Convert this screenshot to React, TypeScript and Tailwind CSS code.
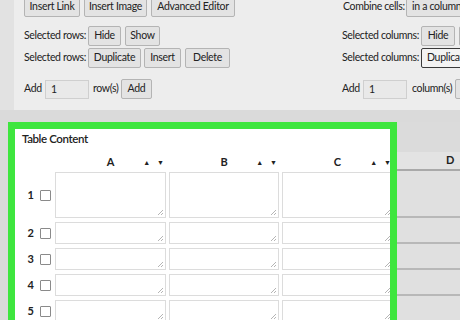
import React from 'react';

const font = '[font-family:Lato,sans-serif]';

const Btn: React.FC<{ w: string; children: React.ReactNode; focus?: boolean }> = ({ w, children, focus }) => (
  <div
    className={`${w} h-[20px] shrink-0 flex items-center justify-center rounded-[2px] border text-[10.5px] tracking-[-0.3px] text-[#222] whitespace-nowrap overflow-hidden ${
      focus ? 'border-[#3a3a3a] bg-[#f3f3f3]' : 'border-[#b4b4b4] bg-[#e3e3e3]'
    }`}
  >
    {children}
  </div>
);

const Label: React.FC<{ w: string; children: React.ReactNode }> = ({ w, children }) => (
  <span className={`${w} shrink-0 text-[10.5px] tracking-[-0.35px] text-[#222] whitespace-nowrap`}>{children}</span>
);

const rows = [
  { n: 1, h: 'h-[46px]' },
  { n: 2, h: 'h-[22px]' },
  { n: 3, h: 'h-[22px]' },
  { n: 4, h: 'h-[22px]' },
  { n: 5, h: 'h-[22px]' },
];

const Arrows = () => (
  <div className="flex items-center gap-[7px] pr-[2px] text-[7px] text-[#222]">
    <span>▲</span>
    <span>▼</span>
  </div>
);

// textarea box with a faint resize grip
const Cell: React.FC<{ w: string; h: string }> = ({ w, h }) => (
  <div className={`${w} ${h} shrink-0 relative border border-[#dcdcdc] bg-white`}>
    <svg className="absolute right-[1px] bottom-[1px]" width="7" height="7" viewBox="0 0 7 7">
      <path d="M6 1L1 6M6 4L4 6" stroke="#b5b5b5" strokeWidth="1" />
    </svg>
  </div>
);

export default function App() {
  return (
    <div className={`w-[460px] h-[320px] overflow-hidden bg-[#dadada] ${font}`}>
      {/* Top toolbar panel */}
      <div className="flex h-[110px]">
        <div className="w-[14px] bg-[#e2e2e2]" />
        <div className="flex-1 bg-[#ededed] pl-[10px] overflow-hidden">
          <div className="flex flex-col -mt-[3px]">
            {/* row 1 */}
            <div className="flex items-center h-[20px]">
              <div className="w-[318px] shrink-0 flex items-center gap-[4px]">
                <Btn w="w-[56px]">Insert Link</Btn>
                <Btn w="w-[63px]">Insert Image</Btn>
                <Btn w="w-[84px]">Advanced Editor</Btn>
              </div>
              <div className="flex items-center">
                <Label w="w-[64px] pl-px">Combine cells:</Label>
                <Btn w="w-[70px] justify-start pl-[5px]">in a column</Btn>
              </div>
            </div>
            {/* row 2 */}
            <div className="flex items-center h-[20px] mt-[9px]">
              <div className="w-[318px] shrink-0 flex items-center">
                <Label w="w-[64px]">Selected rows:</Label>
                <div className="flex gap-[4px]">
                  <Btn w="w-[33px]">Hide</Btn>
                  <Btn w="w-[35px]">Show</Btn>
                </div>
              </div>
              <div className="flex items-center">
                <Label w="w-[79px]">Selected columns:</Label>
                <div className="flex gap-[4px]">
                  <Btn w="w-[34px]">Hide</Btn>
                  <Btn w="w-[36px]">Show</Btn>
                </div>
              </div>
            </div>
            {/* row 3 */}
            <div className="flex items-center h-[20px] mt-[2px]">
              <div className="w-[318px] shrink-0 flex items-center">
                <Label w="w-[64px]">Selected rows:</Label>
                <div className="flex gap-[3px]">
                  <Btn w="w-[53px]">Duplicate</Btn>
                  <Btn w="w-[37px]">Insert</Btn>
                  <Btn w="w-[45px] ml-px">Delete</Btn>
                </div>
              </div>
              <div className="flex items-center">
                <Label w="w-[79px]">Selected columns:</Label>
                <Btn w="w-[56px] justify-start pl-[5px]" focus>
                  Duplicate
                </Btn>
              </div>
            </div>
            {/* row 4 */}
            <div className="flex items-center h-[20px] mt-[11px]">
              <div className="w-[318px] shrink-0 flex items-center">
                <Label w="w-[21px]">Add</Label>
                <div className="w-[44px] h-[19px] border border-[#cfcfcf] bg-[#e9e9e9] text-[10.5px] text-[#222] pl-[5px] leading-[17px]">
                  1
                </div>
                <Label w="w-[28px] ml-[4px]">row(s)</Label>
                <Btn w="w-[31px] h-[18px]">Add</Btn>
              </div>
              <div className="flex items-center">
                <Label w="w-[21px]">Add</Label>
                <div className="w-[44px] h-[19px] border border-[#cfcfcf] bg-[#e9e9e9] text-[10.5px] text-[#222] pl-[5px] leading-[17px]">
                  1
                </div>
                <Label w="w-[43px] ml-[5px]">column(s)</Label>
                <Btn w="w-[31px]">Add</Btn>
              </div>
            </div>
          </div>
        </div>
      </div>

      {/* gap */}
      <div className="h-[12px]" />

      {/* Table area */}
      <div className="flex">
        <div className="w-[8px] shrink-0" />
        <div className="w-[389px] shrink-0 border-[7px] border-[#3ee63e] bg-white overflow-hidden h-[240px]">
          <div className="h-[23px] pl-[7px] pt-[1px] text-[11.5px] font-semibold tracking-[-0.4px] text-[#222] leading-[18px]">
            Table Content
          </div>
          {/* header */}
          <div className="flex h-[20px] items-center">
            <div className="w-[40px] shrink-0" />
            <div className="flex gap-[3px]">
              {['A', 'B', 'C'].map((c, i) => (
                <div key={c} className={`${i === 1 ? 'w-[110px]' : 'w-[111px]'} shrink-0 flex items-center`}>
                  <div className="flex-1" />
                  <span className="text-[11px] font-bold text-[#222]">{c}</span>
                  <div className="flex-1 flex justify-end">
                    <Arrows />
                  </div>
                </div>
              ))}
            </div>
          </div>
          {/* rows */}
          <div className="flex flex-col gap-[4px]">
            {rows.map((r) => (
              <div key={r.n} className="flex items-center">
                <span className="w-[19px] shrink-0 text-right text-[11px] font-bold text-[#222]">{r.n}</span>
                <span className="ml-[6px] w-[11px] h-[11px] shrink-0 border border-[#8a8a8a] bg-white rounded-[1px]" />
                <div className="ml-[4px] flex gap-[3px]">
                  <Cell w="w-[111px]" h={r.h} />
                  <Cell w="w-[110px]" h={r.h} />
                  <Cell w="w-[111px]" h={r.h} />
                </div>
              </div>
            ))}
          </div>
        </div>
        {/* right side outside highlight */}
        <div className="flex-1 flex flex-col">
          <div className="h-[30px] bg-[#dbdbdb]" />
          <div className="h-[19px] bg-[#e3e3e3] border-b-2 border-[#a9a9a9] flex items-center pl-[49px]">
            <span className="text-[11px] font-bold text-[#222]">D</span>
          </div>
          <div className="h-[47px] bg-[#e0e0e0] border-b-2 border-[#b8b8b8]" />
          <div className="h-[26px] bg-[#e0e0e0] border-b-2 border-[#b8b8b8]" />
          <div className="h-[26px] bg-[#e0e0e0] border-b-2 border-[#b8b8b8]" />
          <div className="h-[26px] bg-[#e0e0e0] border-b-2 border-[#b8b8b8]" />
          <div className="h-[30px] bg-[#e0e0e0]" />
        </div>
      </div>
    </div>
  );
}
